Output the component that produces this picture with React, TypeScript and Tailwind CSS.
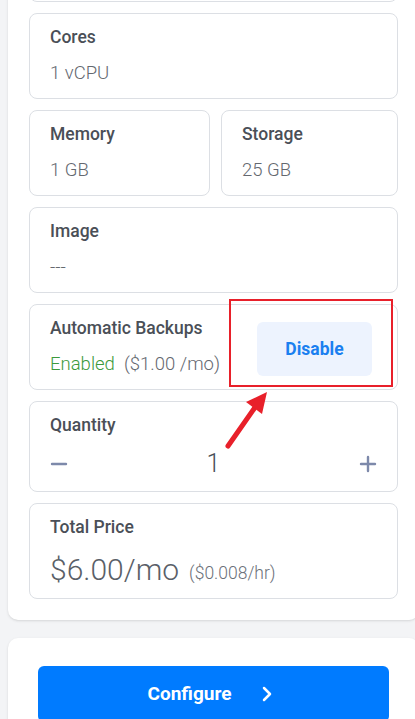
import React from 'react';
import { ChevronRight, Minus, Plus } from 'lucide-react';

const cardClasses = "rounded-lg border border-[#dcdfe4] bg-white px-5 pt-[11px] pb-[13px]";
const labelClasses = "text-[17.5px] leading-6 font-medium text-[#4a4f57]";
const valueClasses = "mt-3 text-[18.5px] leading-6 font-light text-[#64686f]";

interface SpecProps {
  label: string;
  value: string;
}

const Spec: React.FC<SpecProps> = ({ label, value }) => (
  <div className={cardClasses}>
    <div className={labelClasses}>{label}</div>
    <div className={valueClasses}>{value}</div>
  </div>
);

export default function App() {
  return (
    <div
      className="relative w-[415px] h-[719px] overflow-hidden bg-[#f3f4f6]"
      style={{ fontFamily: 'Roboto, "Liberation Sans", sans-serif' }}
    >
      <div className="-mt-[100px] ml-2 w-[411px] rounded-[10px] bg-white pt-4 pb-[21px] px-[21px] shadow-sm">
        <div className="flex flex-col gap-[11px]">
          {/* previous card, scrolled mostly out of view */}
          <div className="h-[86px] rounded-lg border border-[#dcdfe4] bg-white" />
          <Spec label="Cores" value="1 vCPU" />
          <div className="grid grid-cols-[181px_1fr] gap-[11px]">
            <Spec label="Memory" value="1 GB" />
            <Spec label="Storage" value="25 GB" />
          </div>
          <Spec label="Image" value="---" />

          <div className={`${cardClasses} flex items-center justify-between`}>
            <div>
              <div className={labelClasses}>Automatic Backups</div>
              <div className="mt-3 text-[18.5px] leading-6 font-light whitespace-pre">
                <span className="text-[#3c9a3c]">Enabled</span>
                <span className="text-[#64686f]">  ($1.00 /mo)</span>
              </div>
            </div>
            <button className="mr-[5px] mt-[6px] h-[54px] w-[115px] rounded-md bg-[#edf3fe] text-[17.5px] font-bold text-[#1a7ff0]">
              Disable
            </button>
          </div>

          <div className="rounded-lg border border-[#dcdfe4] bg-white px-5 pt-[11px] pb-[11px]">
            <div className={labelClasses}>Quantity</div>
            <div className="mt-[11px] flex h-8 items-center justify-between">
              <Minus className="h-6 w-6 -ml-[3px] text-[#7d89aa]" strokeWidth={2.4} />
              <span className="text-[25px] font-light text-[#4a4f57]">1</span>
              <Plus className="h-6 w-6 -mr-[3px] text-[#7d89aa]" strokeWidth={2.4} />
            </div>
          </div>

          <div className="rounded-lg border border-[#dcdfe4] bg-white px-5 pt-[11px] pb-[10px]">
            <div className={labelClasses}>Total Price</div>
            <div className="mt-[13px] flex h-9 items-center">
              <span className="text-[30px] leading-9 font-light text-[#5a5f68]">$6.00/mo</span>
              <span className="ml-[10px] mt-[6px] text-[17.5px] leading-6 font-light text-[#6b7079]">($0.008/hr)</span>
            </div>
          </div>
        </div>
      </div>

      <div className="mt-[18px] ml-2 w-[411px] rounded-[10px] bg-white pt-7 pb-8 px-[30px] shadow-sm">
        <button className="flex h-[56px] w-[351px] items-center justify-center gap-[24px] rounded-md bg-[#007bff] text-[19px] font-bold text-white">
          <span>Configure</span>
          <ChevronRight className="h-6 w-6" strokeWidth={2.5} />
        </button>
      </div>

      {/* annotation overlay */}
      <div className="absolute left-[229px] top-[299px] h-[88px] w-[164px] border-2 border-[#e8202a]" />
      <svg className="absolute left-0 top-0" width="415" height="719" viewBox="0 0 415 719">
        <line x1="228" y1="446" x2="256" y2="406" stroke="#e8202a" strokeWidth="5" strokeLinecap="round" />
        <polygon points="267,392 246,402 262,414" fill="#e8202a" />
      </svg>
    </div>
  );
}
